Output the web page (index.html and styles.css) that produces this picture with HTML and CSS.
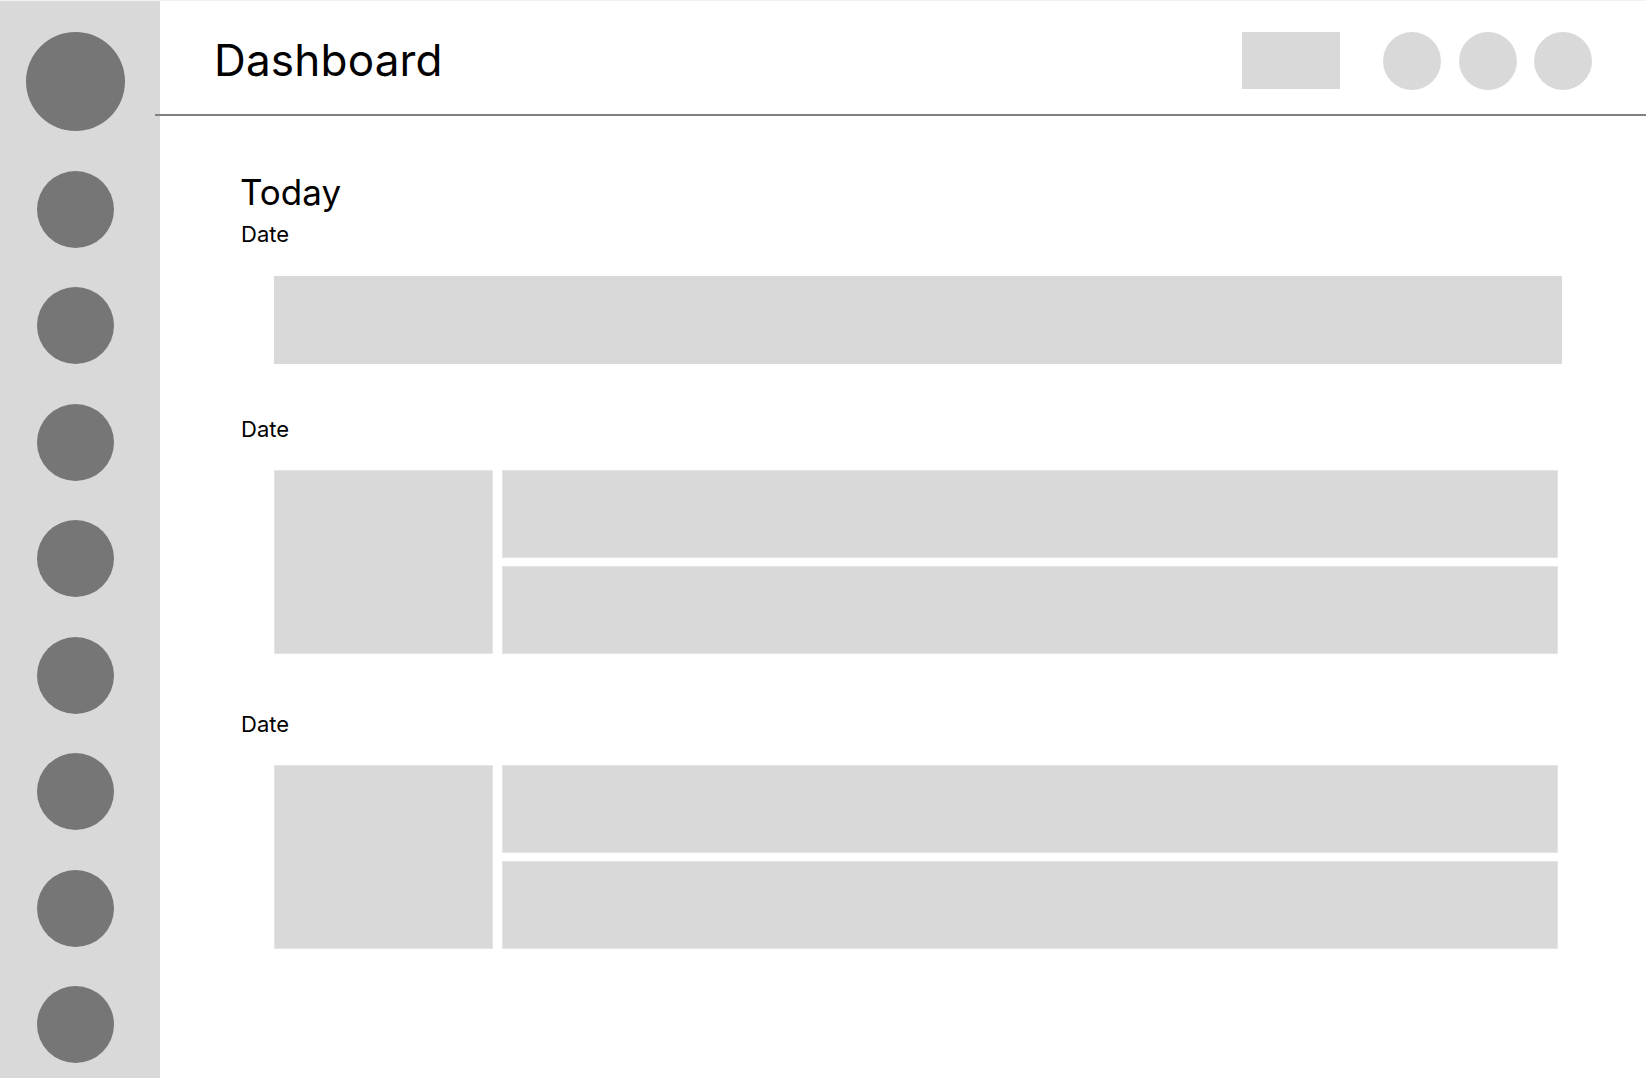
FILE: index.html
```html
<!DOCTYPE html>
<html lang="en">
<head>
<meta charset="utf-8">
<title>Dashboard</title>
<link rel="stylesheet" href="styles.css">
</head>
<body>
<div class="app">
  <nav class="sidebar">
    <div class="avatar"></div>
    <div class="nav-dot"></div>
    <div class="nav-dot"></div>
    <div class="nav-dot"></div>
    <div class="nav-dot"></div>
    <div class="nav-dot"></div>
    <div class="nav-dot"></div>
    <div class="nav-dot"></div>
    <div class="nav-dot"></div>
    <div class="nav-dot"></div>
  </nav>
  <main class="main">
    <header class="header">
      <h1 class="title">Dashboard</h1>
      <div class="actions">
        <div class="action-rect"></div>
        <div class="action-circles">
          <div class="action-circle"></div>
          <div class="action-circle"></div>
          <div class="action-circle"></div>
        </div>
      </div>
    </header>
    <div class="content">
      <h2 class="today">Today</h2>
      <section class="day">
        <div class="date">Date</div>
        <div class="bar"></div>
      </section>
      <section class="day day-second">
        <div class="date">Date</div>
        <div class="group">
          <div class="tile tile-big"></div>
          <div class="tile-stack">
            <div class="tile"></div>
            <div class="tile"></div>
          </div>
        </div>
      </section>
      <section class="day day-third">
        <div class="date">Date</div>
        <div class="group">
          <div class="tile tile-big"></div>
          <div class="tile-stack">
            <div class="tile"></div>
            <div class="tile"></div>
          </div>
        </div>
      </section>
    </div>
  </main>
</div>
</body>
</html>
```

FILE: styles.css
```css
* { box-sizing: border-box; }
html, body {
  margin: 0;
  padding: 0;
}
body {
  background: #f2f2f2;
  padding-top: 1px;
  font-family: Inter, "Noto Sans", sans-serif;
  color: #000;
  overflow: hidden;
}
.app {
  display: flex;
  height: calc(100vh - 1px);
  background: #fff;
  overflow: hidden;
}
.sidebar {
  width: 160px;
  flex: 0 0 160px;
  background: #d9d9d9;
  display: flex;
  flex-direction: column;
  align-items: center;
  padding: 31px 10px 0 0;
  gap: 39.5px;
  overflow: hidden;
}
.avatar {
  width: 99px;
  height: 99px;
  border-radius: 50%;
  background: #767676;
  flex: 0 0 auto;
}
.nav-dot {
  width: 77px;
  height: 77px;
  border-radius: 50%;
  background: #767676;
  flex: 0 0 auto;
}
.main {
  flex: 1;
  display: flex;
  flex-direction: column;
  min-width: 0;
}
.header {
  height: 115px;
  margin-left: -5px;
  padding: 6px 54px 0 59px;
  border-bottom: 2px solid #808080;
  display: flex;
  align-items: center;
  justify-content: space-between;
}
.title {
  margin: 0;
  font-size: 44px;
  line-height: 53px;
  font-weight: 400;
  letter-spacing: 0.2px;
}
.actions {
  display: flex;
  align-items: center;
  gap: 43px;
}
.action-rect {
  width: 98px;
  height: 57px;
  background: #d9d9d9;
}
.action-circles {
  display: flex;
  gap: 17.5px;
}
.action-circle {
  width: 58px;
  height: 58px;
  border-radius: 50%;
  background: #d9d9d9;
}
.content {
  padding: 55px 84px 0 80px;
}
.today {
  margin: 0 0 8px;
  font-size: 35px;
  line-height: 42px;
  font-weight: 400;
}
.date {
  font-size: 22px;
  line-height: 27px;
  padding-left: 1px;
}
.bar {
  margin: 28px 0 0 34px;
  height: 88px;
  background: #d9d9d9;
}
.day-second { margin-top: 52px; }
.day-third { margin-top: 57px; }
.group {
  margin: 27px 4px 0 34px;
  height: 184px;
  display: grid;
  grid-template-columns: 219px 1fr;
  gap: 9px;
}
.tile-stack {
  display: grid;
  grid-template-rows: 88px 88px;
  gap: 8px;
}
.tile {
  background: #d9d9d9;
  border: 1px solid #e4e4e4;
}
```
